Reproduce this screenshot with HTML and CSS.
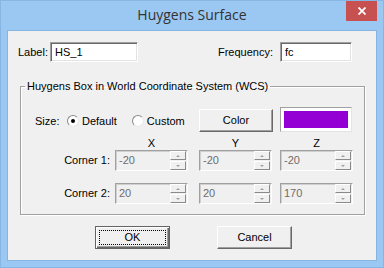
FILE: index.html
```html
<!DOCTYPE html>
<html lang="en">
<head>
    <meta charset="UTF-8">
    <title>Huygens Surface</title>
    <link rel="stylesheet" href="styles.css">
</head>
<body>
    <div class="window">
        <div class="titlebar">
            <span class="title">Huygens Surface</span>
            <div class="close">
                <svg width="8" height="8" viewBox="0 0 8 8"><path d="M0.5 0.5L7.5 7.5M7.5 0.5L0.5 7.5" stroke="#fff" stroke-width="1.8"/></svg>
            </div>
        </div>

        <div class="client">
            <div class="top-row">
                <div class="field">
                    <span>Label:</span>
                    <div class="edit label-edit">HS_1</div>
                </div>
                <div class="field">
                    <span>Frequency:</span>
                    <div class="edit freq-edit">fc</div>
                </div>
            </div>

            <fieldset class="group">
                <legend>Huygens Box in World Coordinate System (WCS)</legend>
                <div class="grid">
                    <div class="size">
                        <span class="size-label">Size:</span>
                        <span class="radio checked"></span>
                        <span>Default</span>
                        <span class="radio custom"></span>
                        <span>Custom</span>
                    </div>
                    <div class="btn color-btn">Color</div>
                    <div class="swatch"><div class="swatch-fill"></div></div>

                    <div></div>
                    <div class="axis">X</div>
                    <div class="axis">Y</div>
                    <div class="axis">Z</div>

                    <div class="row-label">Corner 1:</div>
                    <div class="spin"><span class="val">-20</span><span class="arrows"><i class="up"></i><i class="down"></i></span></div>
                    <div class="spin"><span class="val">-20</span><span class="arrows"><i class="up"></i><i class="down"></i></span></div>
                    <div class="spin"><span class="val">-20</span><span class="arrows"><i class="up"></i><i class="down"></i></span></div>

                    <div class="row-label last">Corner 2:</div>
                    <div class="spin last"><span class="val">20</span><span class="arrows"><i class="up"></i><i class="down"></i></span></div>
                    <div class="spin last"><span class="val">20</span><span class="arrows"><i class="up"></i><i class="down"></i></span></div>
                    <div class="spin last"><span class="val">170</span><span class="arrows"><i class="up"></i><i class="down"></i></span></div>
                </div>
            </fieldset>

            <div class="buttons">
                <div class="btn default"><span class="focus">OK</span></div>
                <div class="btn">Cancel</div>
            </div>
        </div>
    </div>
</body>
</html>
```

FILE: styles.css
```css
body { margin: 0; font-family: "Liberation Sans", Arial, sans-serif; font-size: 11px; color: #000; }
.window { width: 384px; height: 268px; box-sizing: border-box; background: #9bc8f2; box-shadow: inset 0 0 0 1px #86b6e4; display: flex; flex-direction: column; }

/* title bar */
.titlebar { height: 30px; position: relative; text-align: center; }
.title { font-family: "Open Sans", sans-serif; font-size: 14px; line-height: 30px; color: #333; }
.close { position: absolute; top: 1px; right: 7px; width: 31px; height: 20px; background: #c75050; display: flex; align-items: center; justify-content: center; }

/* client area */
.client { flex: 1; margin: 0 7px 7px; border: 1px solid #85b5e2; background: #f0f0f0; padding-top: 11px; }
.top-row { display: flex; justify-content: space-between; padding: 0 24px 0 10px; height: 20px; }
.field { display: flex; align-items: center; gap: 2px; }
.field + .field { gap: 7px; }
.edit { box-sizing: border-box; height: 20px; line-height: 18px; padding-left: 4px; background: #fff; border: 1px solid; border-color: #a0a0a0 #fff #fff #a0a0a0; box-shadow: inset 1px 1px #696969, inset -1px -1px #e3e3e3; }
.label-edit { width: 88px; }
.freq-edit { width: 72px; }

/* group box */
.group { margin: 18px 11px 0 12px; padding: 14px 11px 10px 4px; border: 1px solid #a0a0a0; box-shadow: 1px 1px 0 #fff, inset 1px 1px 0 #fff; }
.group legend { padding: 0 2px; line-height: 13px; }
.grid { margin-left: 10px; display: grid; grid-template-columns: 80px 84px 81px 73px; grid-template-rows: 25px 18px 21px 33px; }

.size { grid-column: 1 / 3; display: flex; align-items: center; padding-top: 3px; }
.size-label { width: 32px; }
.radio { box-sizing: border-box; width: 12px; height: 12px; margin-right: 3px; border-radius: 50%; background: #fff; border: 1px solid; border-color: #8a8a8a #e8e8e8 #e8e8e8 #8a8a8a; display: flex; align-items: center; justify-content: center; }
.radio.checked::after { content: ""; width: 4px; height: 4px; border-radius: 50%; background: #000; }
.radio.custom { margin-left: 15px; }

.btn { box-sizing: border-box; width: 75px; height: 23px; line-height: 21px; text-align: center; background: #f0f0f0; border: 1px solid; border-color: #fff #696969 #696969 #fff; box-shadow: inset -1px -1px #a0a0a0; }
.color-btn { width: 74px; align-self: end; }
.swatch { box-sizing: border-box; width: 72px; height: 25px; padding: 3px; background: #fff; border: 1px solid; border-color: #a0a0a0 #e3e3e3 #e3e3e3 #a0a0a0; }
.swatch-fill { height: 100%; background: #9400d3; }

.axis { width: 73px; text-align: center; line-height: 13px; align-self: end; }
.row-label { line-height: 21px; text-align: right; padding-right: 5px; }
.row-label.last, .spin.last { align-self: end; }

.spin { box-sizing: border-box; width: 73px; height: 21px; display: flex; background: #f0f0f0; border: 1px solid; border-color: #a0a0a0 #fff #fff #a0a0a0; box-shadow: inset 1px 1px #cfcfcf; }
.spin .val { flex: 1; padding-left: 3px; line-height: 19px; color: #6d6d6d; }
.arrows { width: 16px; display: flex; flex-direction: column; gap: 1px; padding: 0 1px 0 0; }
.arrows i { flex: 1; box-sizing: border-box; border: 1px solid; border-color: #fff #8a8a8a #8a8a8a #fff; background: #f0f0f0; display: flex; align-items: center; justify-content: center; }
.arrows .up::after { content: ""; border: 2px solid transparent; border-top: 0; border-bottom: 2px solid #a0a0a0; }
.arrows .down::after { content: ""; border: 2px solid transparent; border-bottom: 0; border-top: 2px solid #a0a0a0; }

/* dialog buttons */
.buttons { display: flex; justify-content: center; gap: 47px; margin-top: 11px; padding-left: 3px; }
.btn.default { display: flex; padding: 3px; border-color: #646464; box-shadow: inset 1px 1px #fff, inset -1px -1px #696969, inset -2px -2px #a0a0a0; }
.focus { flex: 1; border: 1px dotted #000; line-height: 13px; }
```
